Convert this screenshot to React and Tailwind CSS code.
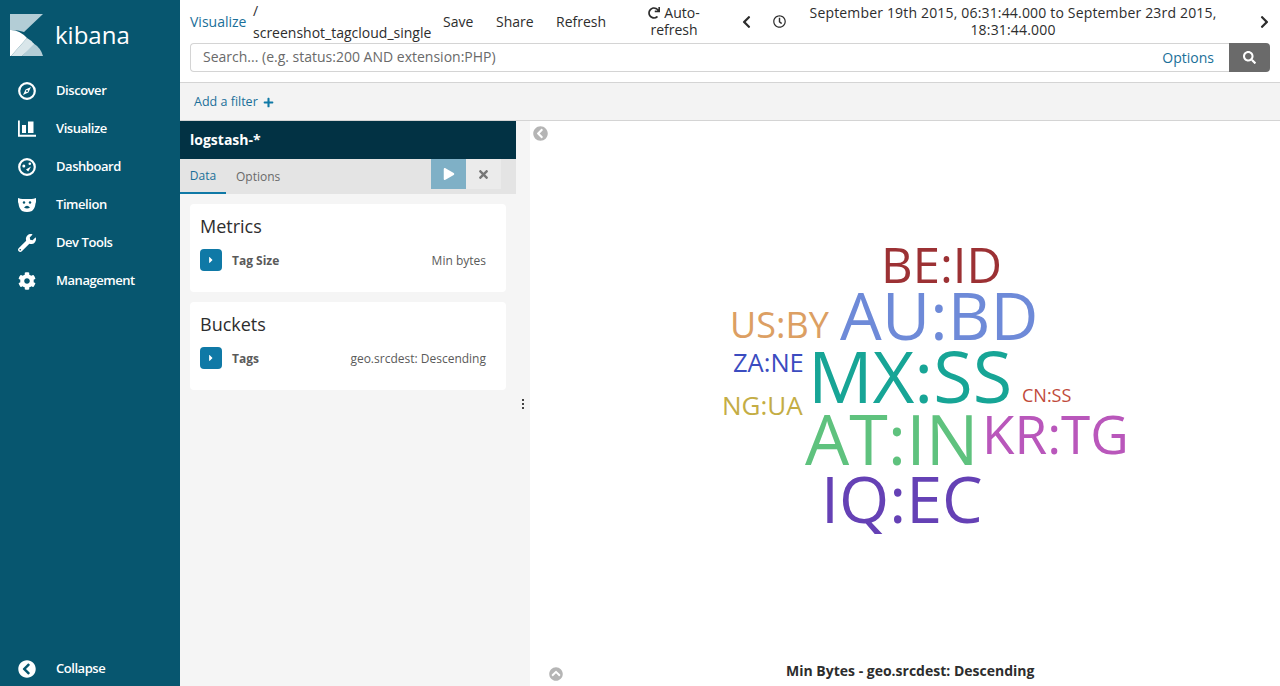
import React from "react";
import {
  FaWrench, FaCog, FaChevronCircleLeft, FaChevronCircleUp,
  FaRedo, FaChevronLeft, FaChevronRight, FaRegClock, FaSearch, FaPlus, FaPlay, FaTimes, FaCaretRight,
} from "react-icons/fa";

function CompassIcon({ className }) {
  return (
    <svg viewBox="0 0 18 18" className={className} fill="none">
      <circle cx="9" cy="9" r="7.8" stroke="white" strokeWidth="2.2" />
      <path d="M13 5 L10.400 10.400 L5 13 L7.600 7.600 Z" fill="white" />
      <circle cx="9" cy="9" r="1" fill="#07566f" />
    </svg>
  );
}

function BarsIcon({ className }) {
  return (
    <svg viewBox="0 0 18 18" className={className} fill="white">
      <path d="M0 0.500 H1.800 V14.700 H18 V16.700 H0 Z" />
      <rect x="4" y="5" width="4" height="8" />
      <rect x="10" y="1.500" width="5.500" height="11.500" />
    </svg>
  );
}

function DashboardIcon({ className }) {
  return (
    <svg viewBox="0 0 18 18" className={className} fill="none">
      <circle cx="9" cy="9" r="7.800" stroke="white" strokeWidth="2.200" />
      <circle cx="5.800" cy="8" r="1.500" fill="white" />
      <circle cx="11.800" cy="5.800" r="1.300" fill="white" />
      <path d="M8 11.500 L13 8.500 L10.200 13.500 Z" fill="white" />
    </svg>
  );
}

function BearIcon({ className }) {
  return (
    <svg viewBox="0 0 18 18" className={className}>
      <path fill="white" d="M0 2 Q3 3.200 5 3 H13 Q15 3.200 18 2 Q18.400 5.500 17.500 7.500 Q17 12.500 14 15 Q9 17 4 15 Q1 12.500 0.500 7.500 Q-0.400 5.500 0 2 Z" />
      <circle cx="6" cy="6.500" r="1.200" fill="#07566f" />
      <circle cx="12" cy="6.500" r="1.200" fill="#07566f" />
      <path d="M6 11.500 Q9 8 12 11.500 Q9 13.500 6 11.500 Z" fill="#07566f" />
    </svg>
  );
}

const NAV_ITEMS = [
  { label: "Discover", icon: CompassIcon },
  { label: "Visualize", icon: BarsIcon },
  { label: "Dashboard", icon: DashboardIcon },
  { label: "Timelion", icon: BearIcon },
  { label: "Dev Tools", icon: FaWrench },
  { label: "Management", icon: FaCog },
];

function Sidebar() {
  return (
    <aside className="w-[180px] shrink-0 bg-[#07566f] flex flex-col text-white">
      <div className="h-[72px] flex items-start pt-[14px] pl-[10px]">
        <svg viewBox="0 0 33 42" className="w-[33px] h-[42px] shrink-0">
          <path fill="#b3cdd6" d="M0 0 H33 L14 18 Q7 15.500 0 16 Z" />
          <path fill="#b3cdd6" d="M23 29 Q31 34 33 42 H12 Z" />
          <path fill="#d9e6ea" d="M24 30 L12 42 H1 L17 24 Q21 26 24 30 Z" />
          <path fill="white" d="M0 16 Q9 15.500 17 24 L1 42 H0 Z" />
        </svg>
        <span className="ml-[12px] mt-[4px] text-[24px] leading-[34px] font-medium">kibana</span>
      </div>
      <nav className="flex flex-col">
        {NAV_ITEMS.map(({ label, icon: Icon }) => (
          <div key={label} className="h-[38px] flex items-center">
            <div className="w-[56px] pl-[18px]">
              <Icon className="w-[18px] h-[18px]" />
            </div>
            <span className="text-[13px] font-semibold tracking-[-0.45px]">{label}</span>
          </div>
        ))}
      </nav>
      <div className="mt-auto h-[34px] flex items-center">
        <div className="w-[56px] pl-[18px]">
          <FaChevronCircleLeft className="w-[18px] h-[18px]" />
        </div>
        <span className="text-[13px] font-semibold tracking-[-0.45px]">Collapse</span>
      </div>
    </aside>
  );
}

function TopBar() {
  return (
    <header className="h-[83px] shrink-0 border-b border-[#d4d4d4] bg-white pl-[10px] pr-[10px]">
      <div className="h-[43px] flex items-center text-[14px] leading-[20px] text-[#2d2d2d]">
        <span className="w-[63px] text-[#1a6f99] shrink-0">Visualize</span>
        <div className="w-[190px] shrink-0 leading-[22px]">
          <div>/</div>
          <div>screenshot_tagcloud_single</div>
        </div>
        <span className="w-[53px] shrink-0">Save</span>
        <span className="w-[60px] shrink-0">Share</span>
        <span className="w-[73px] shrink-0">Refresh</span>
        <div className="w-[90px] shrink-0 text-center leading-[17px] mb-[1px]">
          <div className="flex items-center justify-center gap-[4px]">
            <FaRedo className="w-[12px] h-[12px]" />
            <span>Auto-</span>
          </div>
          <div>refresh</div>
        </div>
        <div className="w-[54px] flex justify-center shrink-0">
          <FaChevronLeft className="w-[11px] h-[14px]" />
        </div>
        <div className="w-[12px] flex justify-center shrink-0">
          <FaRegClock className="w-[13px] h-[13px] shrink-0" />
        </div>
        <div className="w-[456px] shrink-0 text-center leading-[17px] tracking-[0.17px] mb-[1px]">
          September 19th 2015, 06:31:44.000 to September 23rd 2015,
          <br />
          18:31:44.000
        </div>
        <div className="flex-1 flex justify-end">
          <FaChevronRight className="w-[11px] h-[14px]" />
        </div>
      </div>
      <div className="h-[29px] flex">
        <div className="flex-1 flex items-center justify-between border border-r-0 border-[#d4d4d4] rounded-l-[4px] pl-[12px] pr-[15px] text-[14px]">
          <span className="text-[#6a6a6a] mb-[2px]">Search... (e.g. status:200 AND extension:PHP)</span>
          <span className="text-[#1a6f99]">Options</span>
        </div>
        <div className="w-[41px] bg-[#6a6a6a] rounded-r-[4px] flex items-center justify-center text-white">
          <FaSearch className="w-[13px] h-[13px]" />
        </div>
      </div>
    </header>
  );
}

function AggGroup({ title, name, value }) {
  return (
    <section className="h-[88px] bg-white rounded-[4px] pt-[10px] pl-[10px] pr-[20px]">
      <h3 className="text-[18px] leading-[24px] text-[#2d2d2d]">{title}</h3>
      <div className="mt-[11px] flex items-center">
        <div className="w-[22px] h-[22px] rounded-[4px] bg-[#0f79a6] flex items-center justify-center text-white">
          <FaCaretRight className="w-[10px] h-[10px]" />
        </div>
        <span className="ml-[10px] mt-[2px] text-[12px] font-bold text-[#5a5a5a]">{name}</span>
        <span className="ml-auto mt-[2px] text-[12px] text-[#5a5a5a]">{value}</span>
      </div>
    </section>
  );
}

function EditorPanel() {
  return (
    <div className="w-[350px] shrink-0 bg-[#f5f5f5] relative">
      <div className="w-[336px]">
        <div className="h-[38px] bg-[#023244] flex items-center pl-[10px] pb-[1px] text-white text-[14px] font-bold">
          logstash-*
        </div>
        <div className="h-[35px] bg-[#e4e4e4] flex items-start text-[12px]">
          <div className="h-[35px] w-[46px] border-b-[2px] border-[#0f79a6] text-[#1a6f99] flex items-center justify-center">Data</div>
          <div className="h-[35px] ml-[10px] text-[#6a6a6a] flex items-center">Options</div>
          <div className="ml-auto flex mr-[15px]">
            <div className="w-[35px] h-[30px] bg-[#7fb0c6] flex items-center justify-center text-white">
              <FaPlay className="w-[12px] h-[12px]" />
            </div>
            <div className="w-[35px] h-[30px] bg-[#ebebeb] flex items-center justify-center text-[#777777]">
              <FaTimes className="w-[13px] h-[13px]" />
            </div>
          </div>
        </div>
        <div className="p-[10px] flex flex-col gap-[10px]">
          <AggGroup title="Metrics" name="Tag Size" value="Min bytes" />
          <AggGroup title="Buckets" name="Tags" value="geo.srcdest: Descending" />
        </div>
      </div>
      {/* resize handle */}
      <div className="absolute left-[342px] top-[278px] flex flex-col gap-[2px]">
        <div className="w-[2px] h-[2px] bg-[#444444]" />
        <div className="w-[2px] h-[2px] bg-[#444444]" />
        <div className="w-[2px] h-[2px] bg-[#444444]" />
      </div>
    </div>
  );
}

function TagCloud() {
  return (
    <div className="flex-1 relative bg-white overflow-hidden">
      <FaChevronCircleLeft className="absolute left-[3px] top-[5px] w-[15px] h-[15px] text-[#b5b5b5]" />
      <FaChevronCircleUp className="absolute left-[19px] top-[546px] w-[14px] h-[14px] text-[#b5b5b5]" />

      <span className="absolute left-[351px] top-[109px] text-[49px] leading-[68px] text-[#9c3134]">BE:ID</span>
      <span className="absolute left-[310px] top-[148px] text-[66px] leading-[90px] tracking-[0.2px] text-[#6e8ad8]">AU:BD</span>
      <span className="absolute left-[200px] top-[179px] text-[36px] leading-[50px] text-[#dc9f63]">US:BY</span>
      <span className="absolute left-[203px] top-[223px] text-[25.500px] leading-[36px] text-[#3b4cc0]">ZA:NE</span>
      <span className="absolute left-[278px] top-[204px] text-[72px] leading-[100px] text-[#17a596]">MX:SS</span>
      <span className="absolute left-[492px] top-[260px] text-[18px] leading-[28px] text-[#bf4a3c]">CN:SS</span>
      <span className="absolute left-[192px] top-[266px] text-[26px] leading-[36px] text-[#c4ad45]">NG:UA</span>
      <span className="absolute left-[275px] top-[269px] text-[70px] leading-[96px] text-[#5fc27e]">AT:IN</span>
      <span className="absolute left-[452px] top-[277px] text-[53px] leading-[72px] text-[#b957bb]">KR:TG</span>
      <div className="absolute left-[280px] top-[350px] w-[200px] h-[64px] overflow-hidden">
        <span className="absolute left-[11px] top-[-18px] text-[64.500px] leading-[90px] whitespace-nowrap text-[#6541b5]">IQ:EC</span>
      </div>

      <div className="absolute left-[256px] top-[540px] text-[14px] leading-[20px] font-bold text-[#2d2d2d] whitespace-nowrap">
        Min Bytes - geo.srcdest: Descending
      </div>
    </div>
  );
}

export default function App() {
  return (
    <div className="w-[1280px] h-[686px] flex overflow-hidden font-['Open_Sans',sans-serif]">
      <Sidebar />
      <main className="flex-1 min-w-0 flex flex-col">
        <TopBar />
        <div className="h-[38px] shrink-0 bg-[#f3f3f3] border-b border-[#d4d4d4] flex items-center pl-[14px] pt-[1px] text-[12.500px] text-[#1a6f99]">
          Add a filter
          <FaPlus className="ml-[5px] w-[11px] h-[11px] text-[#0f79a6]" />
        </div>
        <div className="flex-1 min-h-0 flex">
          <EditorPanel />
          <TagCloud />
        </div>
      </main>
    </div>
  );
}
